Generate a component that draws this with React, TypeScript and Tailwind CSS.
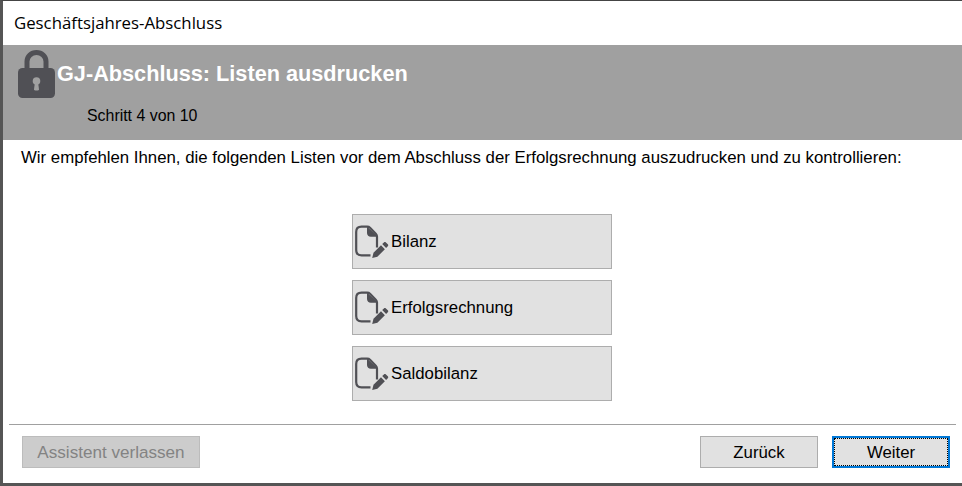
import React from 'react';

const LockIcon = () => (
  <svg width="37" height="48" viewBox="0 0 37 48" className="shrink-0">
    <path d="M9 20V11.500a9.500 9 0 0 1 19 0V20" fill="none" stroke="#505055" strokeWidth="5" />
    <rect x="0" y="18" width="37" height="30" rx="4.500" fill="#505055" />
    <circle cx="18.500" cy="31" r="3.800" fill="#a0a0a0" />
    <path d="M17 32h3l1 7.500c0 .8-.8 1-2.500 1s-2.500-.2-2.500-1z" fill="#a0a0a0" />
  </svg>
);

const DocIcon = () => (
  <svg width="34" height="34" viewBox="0 0 34 34" className="shrink-0">
    <path
      d="M22 22.500V11.500c0-1.200-.4-2-1.200-2.800L15 2.800C14.200 2 13.400 1.700 12.200 1.700H6.500c-3.200 0-5.300 2.100-5.300 5.300v18c0 3.200 2.100 5.300 5.300 5.300H15.500"
      fill="none"
      stroke="#505055"
      strokeWidth="2.200"
    />
    <path d="M12 1.500v6.500c0 2.200 1.600 3.800 3.800 3.800H23z" fill="#505055" />
    <path d="M17.200 33l1.300-5.200 7.500-7.500 3.900 3.900-7.500 7.500z" fill="#505055" />
    <path d="M27.200 19.100l1.700-1.700c.6-.6 1.400-.6 2 0l1.900 1.900c.6.6.6 1.400 0 2l-1.700 1.700z" fill="#505055" />
  </svg>
);

const ListButton = ({ label }: { label: string }) => (
  <button className="flex h-[55px] w-[260px] items-center border border-[#adadad] bg-[#e1e1e1] pl-[2px] text-[16.8px] text-black">
    <DocIcon />
    <span className="ml-[2px]">{label}</span>
  </button>
);

export default function App() {
  return (
    <div className="flex h-[486px] w-[962px] flex-col border-t border-b-[3px] border-l-[3px] border-t-[#444] border-b-[#555] border-l-[#555] bg-white font-['Liberation_Sans',sans-serif] text-black">
      <div className="flex h-[44px] shrink-0 items-center pl-[11px] font-['Open_Sans',sans-serif] text-[16.8px]">
        Geschäftsjahres-Abschluss
      </div>

      <div className="flex h-[95px] shrink-0 flex-col bg-[#a0a0a0] pl-[15px]">
        <div className="mt-[5px] flex items-start">
          <LockIcon />
          <h1 className="mt-[9px] ml-[2px] text-[21.7px] leading-[30px] font-bold text-white">GJ-Abschluss: Listen ausdrucken</h1>
        </div>
        <div className="mt-[8px] ml-[69px] text-[15.9px] leading-[20px]">Schritt 4 von 10</div>
      </div>

      <p className="mt-[6px] pl-[18px] text-[16.8px] leading-[24px] whitespace-nowrap">
        Wir empfehlen Ihnen, die folgenden Listen vor dem Abschluss der Erfolgsrechnung auszudrucken und zu kontrollieren:
      </p>

      <div className="mt-[44px] flex flex-col gap-[11px] pl-[349px]">
        <ListButton label="Bilanz" />
        <ListButton label="Erfolgsrechnung" />
        <ListButton label="Saldobilanz" />
      </div>

      <div className="mx-[6px] mt-[23px] border-t border-[#a0a0a0]" />

      <div className="mt-[11px] flex items-center pr-[12px] pl-[19px] text-[16.8px]">
        <button className="h-[32px] w-[178px] border border-[#bcbcbc] bg-[#cccccc] pt-px text-[17.1px] text-[#838383]">Assistent verlassen</button>
        <button className="ml-auto h-[32px] w-[118px] border border-[#adadad] bg-[#e1e1e1] pt-px">Zurück</button>
        <button className="relative ml-[14px] h-[32px] w-[118px] border-2 border-[#0078d7] bg-[#e1e1e1] pt-px">
          Weiter
          <span className="absolute inset-0 border border-dotted border-black" />
        </button>
      </div>
    </div>
  );
}
